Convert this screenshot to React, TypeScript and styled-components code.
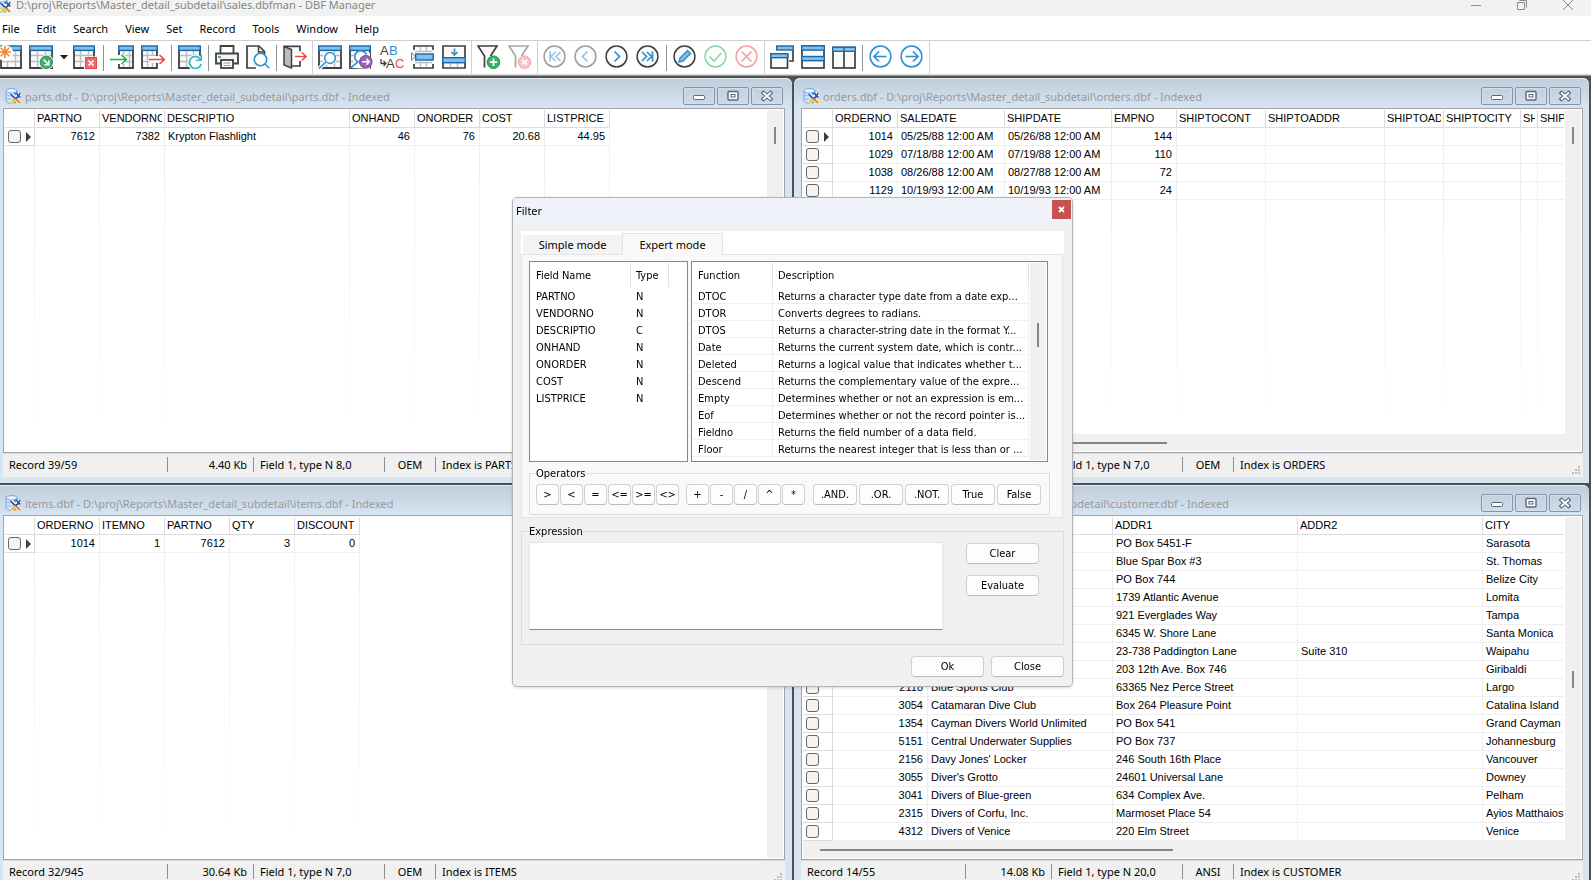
import React, { ReactNode } from 'react';
import styled, { createGlobalStyle, css } from 'styled-components';

const uiFont = '"Segoe UI", "Noto Sans", sans-serif';
const gridFont = '"Microsoft Sans Serif", "Liberation Sans", sans-serif';
const dialogFont = 'Tahoma, "DejaVu Sans Condensed", sans-serif';

const GlobalStyle = createGlobalStyle`
  *, *::before, *::after { box-sizing: border-box; }
  body { margin: 0; overflow: hidden; background: #fff; }
  button, input, textarea { font: inherit; color: inherit; margin: 0; }
`;

const Shell = styled.div`
  display: flex;
  flex-direction: column;
  height: 100vh;
  overflow: hidden;
  font: 11px/16px ${uiFont};
  color: #000;
`;

/* ---------- Application caption ---------- */

const Caption = styled.header`
  display: flex;
  flex: none;
  align-items: center;
  gap: 5px;
  height: 22px;
  margin: -6px 0 0 -5px;
  background: #f2f2f2;
  color: #858585;
`;

const CaptionText = styled.h1`
  flex: 1;
  margin: 0;
  font-size: 11px;
  font-weight: 400;
  white-space: nowrap;
`;

const CaptionButtons = styled.div`
  display: flex;
`;

const CaptionButton = styled.button`
  display: grid;
  place-items: center;
  width: 46px;
  height: 22px;
  padding: 0;
  border: 0;
  background: none;
`;

const MenuBar = styled.nav`
  display: flex;
  flex: none;
  gap: 1px;
  height: 25px;
  margin-left: -6px;
  border-bottom: 1px solid #cfcfcf;
`;

const MenuItem = styled.button`
  padding: 1px 8px 0;
  border: 0;
  background: none;
`;

/* ---------- Toolbar ---------- */

const Toolbar = styled.div`
  display: flex;
  flex: none;
  align-items: stretch;
  height: 34px;
  margin-left: -5px;
  border-bottom: 1px solid #d8d8d8;
`;

const ToolButton = styled.button`
  display: flex;
  align-items: center;
  width: 31px;
  padding: 0 3px 1px;
  border: 0;
  background: none;
  svg { flex: none; }
`;

const DropArrow = styled.button`
  display: grid;
  place-items: center;
  width: 13px;
  padding: 0;
  border: 0;
  background: none;
`;

const Separator = styled.span`
  width: 1px;
  margin: 4px 3px 3px 2px;
  background: #929292;
`;

const GroupLine = styled.span`
  width: 1px;
  margin: 0 2px 0 1px;
  background: #d0d0d0;
`;

/* ---------- MDI desktop and child windows ---------- */

const Desktop = styled.main`
  display: grid;
  flex: none;
  grid-template-columns: minmax(0, 792fr) minmax(0, 795fr);
  grid-template-rows: minmax(0, 1fr) minmax(0, 1fr);
  gap: 2px;
  height: calc(100vh - 65px);
  padding: 2px 2px 0 0;
  border-top: 1px solid #a0a0a0;
  background: #505050;
`;

const ChildWindow = styled.section<{ $cutLeft?: boolean }>`
  display: flex;
  flex-direction: column;
  padding: ${p => (p.$cutLeft ? '0 7px 6px 3px' : '0 6px 6px 7px')};
  border-radius: ${p => (p.$cutLeft ? '0 6px 0 0' : '6px 6px 0 0')};
  background: linear-gradient(#bfcddb, #d7e4f2 30px);
  box-shadow: inset 0 1px #e6edf5;
`;

const ChildCaption = styled.div`
  display: flex;
  flex: none;
  align-items: flex-start;
  gap: 4px;
  height: 30px;
  padding: 9px 2px 3px;
`;

const ChildIcon = styled.span`
  display: flex;
  padding-top: 1px;
`;

const ChildTitle = styled.h2`
  flex: 1;
  margin: 0;
  padding-top: 2px;
  font-size: 11px;
  font-weight: 400;
  line-height: 16px;
  color: #97999c;
  white-space: nowrap;
`;

const ChildButtons = styled.div`
  display: flex;
  gap: 2px;
`;

const ChildButton = styled.button`
  display: grid;
  place-items: center;
  width: 32px;
  height: 18px;
  padding: 0;
  border: 1px solid #8593ad;
  border-radius: 2px;
  background: linear-gradient(#c3d0df, #cddae8);
  box-shadow: inset 0 0 0 1px #d3deea;
`;

const Sheet = styled.div<{ $hScroll?: boolean }>`
  display: grid;
  flex: 1;
  grid-template-columns: minmax(0, 1fr) 17px;
  grid-template-rows: minmax(0, 1fr) ${p => (p.$hScroll ? '17px' : '')};
  min-height: 0;
  padding: 1px;
  border: 1px solid #a3a5aa;
  background: #fff;
`;

const GridArea = styled.div`
  display: flex;
  flex-direction: column;
  overflow: hidden;
  font: 11px/17px ${gridFont};
`;

const VTrack = styled.div<{ $start?: number }>`
  width: 16px;
  margin-left: 1px;
  padding: ${p => p.$start ?? 0}px 0 0 7px;
  background: #f0f0f0;
`;

const VThumb = styled.div<{ $long?: boolean }>`
  width: 2px;
  height: ${p => (p.$long ? 24 : 17)}px;
  background: #868686;
`;

const HTrack = styled.div`
  grid-column: 1 / -1;
  padding: 8px 0 0 17px;
  background: #f0f0f0;
`;

const HThumb = styled.div<{ $width: number }>`
  width: ${p => p.$width}px;
  height: 2px;
  background: #868686;
`;

const DataTable = styled.table<{ $fill?: boolean }>`
  flex: 1;
  table-layout: fixed;
  width: ${p => (p.$fill ? '100%' : '1px')};
  height: 100%;
  border-collapse: separate;
  border-spacing: 0;
`;

const Col = styled.col<{ $width?: number }>`
  width: ${p => (p.$width ? `${p.$width}px` : 'auto')};
`;

const edgeCell = css`
  padding-right: 0;
  border-right: 0;
`;

const HeadCell = styled.th<{ $edge?: boolean }>`
  height: 18px;
  padding: 0 2px 1px;
  border-right: 1px solid #dcdcdc;
  border-bottom: 1px solid #dcdcdc;
  font-weight: 400;
  line-height: 16px;
  text-align: left;
  ${p => p.$edge && edgeCell}
`;

const BodyCell = styled.td<{ $right?: boolean; $edge?: boolean }>`
  height: 18px;
  padding: 0 4px 0 3px;
  border-right: 1px solid #efefef;
  border-bottom: 1px solid #efefef;
  text-align: ${p => (p.$right ? 'right' : 'left')};
  ${p => p.$edge && edgeCell}
`;

const MarkCell = styled(BodyCell)`
  padding: 0 3px;
  border-color: #dcdcdc;
`;

const EmptyCell = styled.td<{ $edge?: boolean }>`
  padding: 0;
  ${p => !p.$edge && css`background: linear-gradient(#efefef, #fff) right / 1px 100% no-repeat;`}
`;

const Clip = styled.span`
  display: block;
  overflow: hidden;
  white-space: nowrap;
`;

const Mark = styled.span`
  display: flex;
  align-items: center;
  gap: 5px;
`;

const Check = styled.input`
  appearance: none;
  width: 13px;
  height: 13px;
  border: 1px solid #666;
  border-radius: 3px;
  background: #f4f4f4;
`;

const StatusBar = styled.footer`
  display: flex;
  flex: none;
  align-items: flex-start;
  height: 24px;
  padding-top: 3px;
  border-top: 1px solid #dadada;
  background: #f0f0f0;
`;

const StatusCell = styled.span<{ $width?: number; $align?: string }>`
  ${p => (p.$width ? css`flex: none; width: ${p.$width}px; border-right: 1px solid #8d8d8d;` : css`flex: 1;`)}
  height: 15px;
  padding: 0 6px;
  line-height: 15px;
  text-align: ${p => p.$align ?? 'left'};
  white-space: nowrap;
`;

const Grip = styled.span`
  align-self: flex-end;
  padding: 0 2px 2px 0;
  line-height: 0;
`;

/* ---------- Filter dialog ---------- */

const Dialog = styled.div`
  position: fixed;
  top: 197px;
  left: 512px;
  width: 561px;
  border: 1px solid #b4b4b4;
  border-radius: 5px;
  background: #f0f0f0;
  box-shadow: 0 1px 3px rgba(0, 0, 0, 0.15);
  font: 11px/13px ${dialogFont};
  overflow: hidden;
`;

const DialogCaption = styled.div`
  display: flex;
  align-items: flex-start;
  justify-content: space-between;
  height: 25px;
  padding: 2px 1px 0 3px;
  background: #eff3f9;
  font: 11px/22px ${uiFont};
`;

const DialogClose = styled.button`
  display: grid;
  place-items: center;
  width: 19px;
  height: 19px;
  padding: 0;
  border: 0;
  background: #c75050;
`;

const DialogBody = styled.div`
  padding: 8px 8px 9px;
`;

const Tabs = styled.div`
  display: flex;
  align-items: flex-end;
  height: 24px;
  margin-bottom: -1px;
  padding-left: 2px;
  background: #fff;
  font: 11px/16px ${uiFont};
`;

const Tab = styled.button<{ $active?: boolean }>`
  position: relative;
  width: ${p => (p.$active ? 101 : 99)}px;
  height: ${p => (p.$active ? 22 : 20)}px;
  padding: ${p => (p.$active ? 0 : '1px 0 0')};
  border: solid #e3e3e3;
  border-width: ${p => (p.$active ? '1px 1px 0' : '0 0 1px')};
  background: ${p => (p.$active ? '#f9f9f9' : '#f3f3f3')};
`;

const Panel = styled.div`
  margin-right: 1px;
  padding: 6px 14px 2px 7px;
  border: 1px solid #e3e3e3;
  background: #f9f9f9;
`;

const Lists = styled.div`
  display: flex;
  gap: 3px;
  height: 201px;
  margin-bottom: 5px;
`;

const ListBox = styled.div<{ $width?: number }>`
  display: flex;
  ${p => (p.$width ? css`flex: none; width: ${p.$width}px;` : css`flex: 1;`)}
  padding: 1px;
  border: 1px solid #828790;
  background: #fff;
  overflow: hidden;
`;

const ListTable = styled.table`
  flex: none;
  align-self: flex-start;
  table-layout: fixed;
  width: 1px;
  border-collapse: separate;
  border-spacing: 0;
  th, td { padding: 0 0 0 5px; font-weight: 400; text-align: left; white-space: nowrap; }
  th { height: 24px; border-right: 1px solid #e2e2e2; }
  td { height: 17px; padding-top: 2px; }
`;

const LinedCell = styled.td`
  border-right: 1px solid #efefef;
  border-bottom: 1px solid #efefef;
`;

const Group = styled.fieldset`
  margin: 0;
  min-width: 0;
  border: 1px solid #dcdcdc;
`;

const OperatorGroup = styled(Group)`
  display: flex;
  margin-right: -2px;
  padding: 4px 6px 9px;
`;

const ExpressionGroup = styled(Group)`
  display: flex;
  gap: 23px;
  margin-top: 7px;
  padding: 4px 24px 14px 7px;
`;

const Legend = styled.legend`
  padding: 0;
`;

const ButtonRow = styled.div`
  display: flex;
  gap: 1px;
  margin-right: 7px;
`;

const WordRow = styled.div`
  display: flex;
  gap: 2px;
  margin-left: 1px;
`;

const PushButton = styled.button<{ $width: number }>`
  flex: none;
  width: ${p => p.$width}px;
  height: 21px;
  padding: 0;
  border: 1px solid #d0d0d0;
  border-bottom-color: #bababa;
  border-radius: 4px;
  background: #fdfdfd;
  line-height: 19px;
  white-space: nowrap;
`;

const ExpressionBox = styled.textarea`
  display: block;
  flex: 1;
  height: 88px;
  padding: 4px;
  border: 1px solid #e6e6e6;
  border-bottom-color: #868686;
  background: #fff;
  resize: none;
`;

const ButtonColumn = styled.div`
  display: flex;
  flex-direction: column;
  gap: 11px;
  padding-top: 1px;
`;

const DialogFooter = styled.div`
  display: flex;
  justify-content: flex-end;
  gap: 7px;
  padding-top: 11px;
`;

/* ---------- Icons ---------- */

const DARK = '#404040';
const BLUE = '#2b8fd0';
const LIGHT = '#83bfe8';
const EDGE = '#1767ab';

const Svg = ({ children, size = 24 }: { children: ReactNode; size?: number }) => (
  <svg width={size} height={size} viewBox={`0 0 ${size} ${size}`} fill="none" aria-hidden="true">{children}</svg>
);

const BaseTable = ({ x = 0, w = 24 }: { x?: number; w?: number }) => (
  <>
    <rect x={x + 1} y={1} width={w - 2} height={22} fill="#fafafa" />
    <path d={`M${x + 2} 10.5h${w - 4}M${x + 2} 16.5h${w - 4}M${x + Math.round(w / 3)}.5 6v16M${x + Math.round((w * 2) / 3)}.5 6v16`} stroke="#bdbdbd" strokeWidth="1.4" />
    <path d={`M${x + 1} 5v18h${w - 2}V5`} stroke={DARK} strokeWidth="1.8" />
    <rect x={x + 0.7} y={1} width={w - 1.4} height={4.4} fill={LIGHT} stroke={EDGE} strokeWidth="1.4" />
  </>
);

const NewTable = () => (
  <Svg>
    <BaseTable x={2} w={22} />
    <circle cx="7" cy="8" r="8" fill="#fff" />
    <path d="M7 1v12M1 7h12M2.7 2.7l8.6 8.6M11.3 2.7l-8.6 8.6" stroke="#f0862b" strokeWidth="1.6" />
  </Svg>
);
const OpenTable = () => (
  <Svg>
    <BaseTable />
    <circle cx="17.3" cy="17.3" r="7.4" fill="#fff" />
    <circle cx="17.3" cy="17.3" r="6.2" fill="#3fae6c" stroke="#189a4c" />
    <path d="M14.5 14.5l5 5M19.8 15.3v4.5h-4.5" stroke="#fff" strokeWidth="1.6" />
  </Svg>
);
const DeleteTable = () => (
  <Svg>
    <BaseTable w={22} />
    <rect x="11" y="11.5" width="13" height="12.5" fill="#fff" />
    <rect x="12.6" y="12.6" width="11" height="11" fill="#ef6a6e" stroke="#e8383f" />
    <path d="M15.5 15.5l5 5M20.5 15.5l-5 5" stroke="#fff" strokeWidth="1.7" />
  </Svg>
);
const ImportTable = () => (
  <Svg>
    <BaseTable x={8} w={16} />
    <path d="M6 10h9v9H6z" fill="#fff" />
    <path d="M0 14.5h16M11.5 10l4.8 4.5-4.8 4.5" stroke="#1fae52" strokeWidth="1.6" />
  </Svg>
);
const ExportTable = () => (
  <Svg>
    <BaseTable w={17} />
    <path d="M8 11h12v7H8z" fill="#fff" />
    <path d="M8 14.5h15M18.5 10l4.8 4.5-4.8 4.5" stroke="#f04747" strokeWidth="1.6" />
  </Svg>
);
const RefreshTable = () => (
  <Svg>
    <BaseTable w={23} />
    <circle cx="17.5" cy="17.5" r="8" fill="#fff" />
    <path d="M22.6 14.5a6 6 0 1 0 .6 4.5" stroke="#32b6c9" strokeWidth="1.7" />
    <path d="M23.3 9.8v5.4h-5.4" stroke="#32b6c9" strokeWidth="1.6" />
  </Svg>
);
const Print = () => (
  <Svg>
    <path d="M5.5 8V1h13v7" fill="#fff" stroke={DARK} strokeWidth="1.8" />
    <path d="M5.5 18.5H1V8.5h22v10h-4.5" fill="#f4f4f4" stroke={DARK} strokeWidth="1.8" />
    <path d="M3 12h3" stroke={BLUE} strokeWidth="1.6" />
    <rect x="6" y="15" width="12" height="8" fill="#fff" stroke={DARK} strokeWidth="1.8" />
    <path d="M8.5 18h7M8.5 20.5h7" stroke="#999" strokeWidth="1.1" />
  </Svg>
);
const Preview = () => (
  <Svg>
    <path d="M10 23H1V1h12l5.5 5.5V9" fill="#fafafa" stroke={DARK} strokeWidth="1.7" />
    <path d="M12.5 1v6h6" stroke={DARK} strokeWidth="1.5" />
    <circle cx="14.5" cy="14.5" r="6.2" fill="#fff" stroke={BLUE} strokeWidth="1.6" />
    <path d="M19 19l4.3 4.3" stroke={BLUE} strokeWidth="1.6" />
  </Svg>
);
const Exit = () => (
  <Svg>
    <path d="M1 1.5l7.5 3V23L1 20z" fill="#bcbcbc" stroke={DARK} strokeWidth="1.5" />
    <path d="M1 1.3h16v5M8.5 21H17v-5" stroke={DARK} strokeWidth="1.7" />
    <path d="M12 11.5h11M18.8 7.5l4.4 4-4.4 4" stroke="#f04747" strokeWidth="1.6" />
  </Svg>
);
const Find = () => (
  <Svg>
    <BaseTable />
    <circle cx="11.5" cy="13" r="7" fill="#fff" />
    <circle cx="12" cy="13" r="5.4" fill="#fff" stroke={BLUE} strokeWidth="1.5" />
    <path d="M8 17l-7.5 7" stroke="#fff" strokeWidth="4" />
    <path d="M8 17l-7 6.3" stroke={BLUE} strokeWidth="1.6" />
  </Svg>
);
const FindNext = () => (
  <Svg>
    <BaseTable w={22} />
    <path d="M3 23L6 8h15v16z" fill="#fff" />
    <path d="M17.5 9.8A6 6 0 1 0 9 17L1 23.3" stroke={BLUE} strokeWidth="1.6" />
    <circle cx="16.8" cy="16.8" r="6.3" fill="#9a62b5" stroke="#7c3d9c" />
    <path d="M13 16.8h7M17.3 13.8l3 3-3 3" stroke="#fff" strokeWidth="1.5" />
  </Svg>
);
const Replace = () => (
  <Svg>
    <g fontFamily='"Liberation Sans", sans-serif' fontSize="13">
      <text x="0" y="10" fill={DARK}>A</text>
      <text x="9" y="10" fill={BLUE}>B</text>
      <text x="6" y="23" fill={DARK}>A</text>
      <text x="15" y="23" fill="#f04747">C</text>
    </g>
    <path d="M1 14v4.5h4.5M3.5 16L6 18.5 3.5 21" stroke={DARK} strokeWidth="1.3" />
  </Svg>
);
const GoTo = () => (
  <Svg>
    <path d="M3 5V1h19v4M3 19v4h19v-4" stroke={DARK} strokeWidth="1.7" />
    <path d="M9.5 2v5M15.5 2v5M9.5 17v5M15.5 17v5M4 6.5h17M4 17.5h17" stroke="#bdbdbd" strokeWidth="1.3" />
    <rect x="4.7" y="9" width="17.5" height="6" fill={LIGHT} stroke={EDGE} strokeWidth="1.4" />
    <path d="M.5 7.5v8L4 11.5z" fill="#fff" stroke={BLUE} />
  </Svg>
);
const Append = () => (
  <Svg>
    <path d="M1 12V1h22v11M1 18v5h22v-5" fill="#fafafa" stroke={DARK} strokeWidth="1.7" />
    <path d="M8.5 18v4M15.5 18v4" stroke="#bdbdbd" strokeWidth="1.3" />
    <rect x=".7" y="12.7" width="22.6" height="5" fill={LIGHT} stroke={EDGE} strokeWidth="1.4" />
    <path d="M12.5 3.5v6M9.5 7l3 3 3-3" stroke={BLUE} strokeWidth="1.6" />
  </Svg>
);
const Filter = ({ remove }: { remove?: boolean }) => (
  <Svg>
    <g opacity={remove ? 0.45 : 1}>
      <path d="M7.5 22.5V11L1 1h19l-6.500 10" fill="#fafafa" stroke={DARK} strokeWidth="1.7" />
      <circle cx="16.5" cy="17.2" r="6.3" fill={remove ? '#f2787c' : '#3fae6c'} stroke={remove ? '#e8383f' : '#189a4c'} />
      <path d={remove ? 'M14 14.7l5 5M19 14.7l-5 5' : 'M16.5 13.5v7.4M12.8 17.2h7.4'} stroke="#fff" strokeWidth="1.7" />
    </g>
  </Svg>
);
const Round = ({ d, ring = DARK, ink = BLUE, dim }: { d: string; ring?: string; ink?: string; dim?: boolean }) => (
  <Svg>
    <g opacity={dim ? 0.5 : 1}>
      <circle cx="11.5" cy="11.5" r="10.4" fill="#fdfdfd" stroke={ring} strokeWidth="1.5" />
      <path d={d} stroke={ink} strokeWidth="1.7" />
    </g>
  </Svg>
);
const Pencil = () => (
  <Svg>
    <circle cx="11.5" cy="11.5" r="10.4" fill="#fdfdfd" stroke={DARK} strokeWidth="1.5" />
    <path d="M6 17l1-4 7.5-7.5 3 3L10 16z" fill={LIGHT} stroke={BLUE} strokeWidth="1.4" />
  </Svg>
);
const Cascade = () => (
  <Svg>
    <path d="M23 5v11h-4" stroke={DARK} strokeWidth="1.7" />
    <rect x="6.7" y="1" width="16.6" height="4" fill={LIGHT} stroke={EDGE} strokeWidth="1.4" />
    <rect x="1" y="9" width="16.5" height="14" fill="#fafafa" stroke={DARK} strokeWidth="1.7" />
    <rect x=".7" y="8.7" width="17" height="4" fill={LIGHT} stroke={EDGE} strokeWidth="1.4" />
  </Svg>
);
const TileRows = () => (
  <Svg>
    <rect x="1" y="1" width="22" height="22" fill="#fafafa" stroke={DARK} strokeWidth="1.7" />
    <rect x=".7" y=".9" width="22.6" height="4.2" fill={LIGHT} stroke={EDGE} strokeWidth="1.4" />
    <rect x=".7" y="11.5" width="22.6" height="4.2" fill={LIGHT} stroke={EDGE} strokeWidth="1.4" />
  </Svg>
);
const TileColumns = () => (
  <Svg>
    <rect x="1" y="2.5" width="22" height="20.5" fill="#fafafa" stroke={DARK} strokeWidth="1.7" />
    <path d="M12 6v17" stroke={DARK} strokeWidth="1.7" />
    <path d="M.7 2.2h22.6v4.200H.7zM12 2v4" fill={LIGHT} stroke={EDGE} strokeWidth="1.4" />
  </Svg>
);

const DatabaseIcon = () => (
  <Svg size={16}>
    <path d="M1 3v10c0 1.5 2.500 2.300 5.500 2.300S12 14.500 12 13V3z" fill="#cfe3fb" stroke="#7da7da" />
    <path d="M7.500 5.200c2.500-.2 4.500-.9 4.500-1.900V13c0 1.500-2 2.200-4.500 2.300z" fill="#3f7fd6" />
    <ellipse cx="6.5" cy="2.8" rx="5.5" ry="2.200" fill="#eaf4ff" stroke="#6fa0dc" />
    <path d="M1 6.500c1 1.500 8 2 11 0M1 10c1 1.500 8 2 11 0" stroke="#8db5e6" />
    <path d="M6 6l9 9M15 6l-9 9" stroke="#fff" strokeWidth="4" />
    <path d="M5.500 6l5 5" stroke="#2c5fb8" strokeWidth="1.8" />
    <path d="M10.500 10.500L15 15" stroke="#e98a15" strokeWidth="2.400" />
    <path d="M15 5l-1.500 3.500L10.500 10.500M12 5.500l1.500 3 2 .5" stroke="#2450a8" strokeWidth="1.6" />
    <path d="M10 11l-3.700 3.700" stroke="#f7c02c" strokeWidth="2.800" />
  </Svg>
);

const GripIcon = () => (
  <svg width="10" height="10" fill="#bdbdbd" aria-hidden="true">
    <path d="M7 1h2v2H7zM4 4h2v2H4zM7 4h2v2H7zM1 7h2v2H1zM4 7h2v2H4zM7 7h2v2H7z" />
  </svg>
);

/* ---------- Data ---------- */

type Column = { name: string; width?: number; numeric?: boolean };
type WindowProps = {
  file: string;
  cutLeft?: boolean;
  columns: Column[];
  rows: string[][];
  current?: number;
  thumbAt?: number;
  hScroll?: number;
  status: string[];
};

const parts: WindowProps = {
  file: 'parts.dbf',
  cutLeft: true,
  columns: [
    { name: 'PARTNO', width: 65, numeric: true }, { name: 'VENDORNO', width: 65, numeric: true },
    { name: 'DESCRIPTIO', width: 185 }, { name: 'ONHAND', width: 65, numeric: true },
    { name: 'ONORDER', width: 65, numeric: true }, { name: 'COST', width: 65, numeric: true },
    { name: 'LISTPRICE', width: 65, numeric: true },
  ],
  rows: [['7612', '7382', 'Krypton Flashlight', '46', '76', '20.68', '44.95']],
  current: 0,
  thumbAt: 17,
  status: ['Record 39/59', '4.40 Kb', 'Field 1, type N 8,0', 'OEM', 'Index is PARTS'],
};

const orders: WindowProps = {
  file: 'orders.dbf',
  columns: [
    { name: 'ORDERNO', width: 65, numeric: true }, { name: 'SALEDATE', width: 107 },
    { name: 'SHIPDATE', width: 107 }, { name: 'EMPNO', width: 65, numeric: true },
    { name: 'SHIPTOCONT', width: 89 }, { name: 'SHIPTOADDR', width: 119 },
    { name: 'SHIPTOADDR2', width: 59 }, { name: 'SHIPTOCITY', width: 77 },
    { name: 'SHIPTOSTAT', width: 17 }, { name: 'SHIPTOZIP' },
  ],
  rows: [
    ['1014', '05/25/88 12:00 AM', '05/26/88 12:00 AM', '144'],
    ['1029', '07/18/88 12:00 AM', '07/19/88 12:00 AM', '110'],
    ['1038', '08/26/88 12:00 AM', '08/27/88 12:00 AM', '72'],
    ['1129', '10/19/93 12:00 AM', '10/19/93 12:00 AM', '24'],
  ],
  current: 0,
  thumbAt: 17,
  hScroll: 347,
  status: ['', '', 'Field 1, type N 7,0', 'OEM', 'Index is ORDERS'],
};

const items: WindowProps = {
  file: 'items.dbf',
  cutLeft: true,
  columns: ['ORDERNO', 'ITEMNO', 'PARTNO', 'QTY', 'DISCOUNT'].map(name => ({ name, width: 65, numeric: true })),
  rows: [['1014', '1', '7612', '3', '0']],
  current: 0,
  status: ['Record 32/945', '30.64 Kb', 'Field 1, type N 7,0', 'OEM', 'Index is ITEMS'],
};

const customer: WindowProps = {
  file: 'customer.dbf',
  columns: [
    { name: '', width: 95, numeric: true }, { name: '', width: 185 },
    { name: 'ADDR1', width: 185 }, { name: 'ADDR2', width: 185 }, { name: 'CITY' },
  ],
  rows: [
    ['', '', 'PO Box 5451-F', '', 'Sarasota'],
    ['', '', 'Blue Spar Box #3', '', 'St. Thomas'],
    ['', '', 'PO Box 744', '', 'Belize City'],
    ['', '', '1739 Atlantic Avenue', '', 'Lomita'],
    ['', '', '921 Everglades Way', '', 'Tampa'],
    ['', '', '6345 W. Shore Lane', '', 'Santa Monica'],
    ['', '', '23-738 Paddington Lane', 'Suite 310', 'Waipahu'],
    ['', '', '203 12th Ave. Box 746', '', 'Giribaldi'],
    ['2118', 'Blue Sports Club', '63365 Nez Perce Street', '', 'Largo'],
    ['3054', 'Catamaran Dive Club', 'Box 264 Pleasure Point', '', 'Catalina Island'],
    ['1354', 'Cayman Divers World Unlimited', 'PO Box 541', '', 'Grand Cayman'],
    ['5151', 'Central Underwater Supplies', 'PO Box 737', '', 'Johannesburg'],
    ['2156', "Davy Jones' Locker", '246 South 16th Place', '', 'Vancouver'],
    ['3055', "Diver's Grotto", '24601 Universal Lane', '', 'Downey'],
    ['3041', 'Divers of Blue-green', '634 Complex Ave.', '', 'Pelham'],
    ['2315', 'Divers of Corfu, Inc.', 'Marmoset Place 54', '', 'Ayios Matthaios'],
    ['4312', 'Divers of Venice', '220 Elm Street', '', 'Venice'],
  ],
  thumbAt: 154,
  hScroll: 353,
  status: ['Record 14/55', '14.08 Kb', 'Field 1, type N 20,0', 'ANSI', 'Index is CUSTOMER'],
};

const fields = [['PARTNO', 'N'], ['VENDORNO', 'N'], ['DESCRIPTIO', 'C'], ['ONHAND', 'N'], ['ONORDER', 'N'], ['COST', 'N'], ['LISTPRICE', 'N']];

const functions = [
  ['DTOC', 'Returns a character type date from a date exp...'],
  ['DTOR', 'Converts degrees to radians.'],
  ['DTOS', 'Returns a character-string date in the format Y...'],
  ['Date', 'Returns the current system date, which is contr...'],
  ['Deleted', 'Returns a logical value that indicates whether t...'],
  ['Descend', 'Returns the complementary value of the expre...'],
  ['Empty', 'Determines whether or not an expression is em...'],
  ['Eof', 'Determines whether or not the record pointer is...'],
  ['Fieldno', 'Returns the field number of a data field.'],
  ['Floor', 'Returns the nearest integer that is less than or ...'],
];

/* ---------- Composition ---------- */

function DataWindow({ file, cutLeft, columns, rows, current, thumbAt, hScroll, status }: WindowProps) {
  const [record, size, field, encoding, index] = status;
  return (
    <ChildWindow $cutLeft={cutLeft}>
      <ChildCaption>
        <ChildIcon><DatabaseIcon /></ChildIcon>
        <ChildTitle>{`${file} - D:\\proj\\Reports\\Master_detail_subdetail\\${file} - Indexed`}</ChildTitle>
        <ChildButtons>
          <ChildButton aria-label="Minimize">
            <svg width="12" height="12" fill="#fff" stroke="#5b667c"><rect x=".5" y="5.5" width="11" height="4" rx="1" /></svg>
          </ChildButton>
          <ChildButton aria-label="Maximize">
            <svg width="12" height="12" fill="#fff" stroke="#5b667c"><rect x="1" y="1.5" width="10" height="8.5" rx="1" strokeWidth="1.4" /><rect x="4" y="4.5" width="4" height="2.5" /></svg>
          </ChildButton>
          <ChildButton aria-label="Close">
            <svg width="12" height="12" fill="none"><path d="M2.500 3l7 6M9.500 3l-7 6" stroke="#5b667c" strokeWidth="4" strokeLinecap="square" /><path d="M2 2.500l8 7M10 2.500l-8 7" stroke="#fff" strokeWidth="2" /></svg>
          </ChildButton>
        </ChildButtons>
      </ChildCaption>
      <Sheet $hScroll={hScroll !== undefined}>
        <GridArea>
          <DataTable $fill={columns.some(c => !c.width)}>
            <colgroup>
              <Col $width={30} />
              {columns.map((c, i) => <Col key={i} $width={c.width} />)}
            </colgroup>
            <thead>
              <tr>
                <HeadCell />
                {columns.map((c, i) => <HeadCell key={i} $edge={!c.width}><Clip>{c.name}</Clip></HeadCell>)}
              </tr>
            </thead>
            <tbody>
              {rows.map((row, r) => (
                <tr key={r}>
                  <MarkCell>
                    <Mark>
                      <Check type="checkbox" aria-label={`Mark record ${r + 1}`} />
                      {r === current && <svg width="5" height="10" fill="#404040" aria-hidden="true"><path d="M0 0l5 5-5 5z" /></svg>}
                    </Mark>
                  </MarkCell>
                  {columns.map((c, i) => <BodyCell key={i} $right={c.numeric} $edge={!c.width}><Clip>{row[i]}</Clip></BodyCell>)}
                </tr>
              ))}
              <tr>
                <EmptyCell />
                {columns.map((c, i) => <EmptyCell key={i} $edge={!c.width} />)}
              </tr>
            </tbody>
          </DataTable>
        </GridArea>
        <VTrack $start={thumbAt}>{thumbAt !== undefined && <VThumb />}</VTrack>
        {hScroll !== undefined && <HTrack><HThumb $width={hScroll} /></HTrack>}
      </Sheet>
      <StatusBar>
        <StatusCell $width={165}>{record}</StatusCell>
        <StatusCell $width={86} $align="right">{size}</StatusCell>
        <StatusCell $width={131}>{field}</StatusCell>
        <StatusCell $width={51} $align="center">{encoding}</StatusCell>
        <StatusCell>{index}</StatusCell>
        <Grip><GripIcon /></Grip>
      </StatusBar>
    </ChildWindow>
  );
}

const Tool = ({ label, children }: { label: string; children: ReactNode }) => (
  <ToolButton aria-label={label}>{children}</ToolButton>
);

function MainToolbar() {
  return (
    <Toolbar role="toolbar">
      <Tool label="New table"><NewTable /></Tool>
      <Tool label="Open table"><OpenTable /></Tool>
      <DropArrow aria-label="Recent tables"><svg width="8" height="5" fill="#202020"><path d="M0 0h8L4 4.5z" /></svg></DropArrow>
      <Tool label="Close table"><DeleteTable /></Tool>
      <Separator />
      <Tool label="Import"><ImportTable /></Tool>
      <Tool label="Export"><ExportTable /></Tool>
      <Separator />
      <Tool label="Refresh"><RefreshTable /></Tool>
      <Separator />
      <Tool label="Print"><Print /></Tool>
      <Tool label="Preview"><Preview /></Tool>
      <Separator />
      <Tool label="Exit"><Exit /></Tool>
      <GroupLine />
      <Tool label="Find"><Find /></Tool>
      <Tool label="Find next"><FindNext /></Tool>
      <Tool label="Replace"><Replace /></Tool>
      <Tool label="Go to"><GoTo /></Tool>
      <Tool label="Append"><Append /></Tool>
      <GroupLine />
      <Tool label="Set filter"><Filter /></Tool>
      <Tool label="Remove filter"><Filter remove /></Tool>
      <GroupLine />
      <Tool label="First"><Round dim d="M7 6.5v10M12.5 7L8 11.500l4.500 4.500M17.500 7L13 11.500l4.500 4.500" /></Tool>
      <Tool label="Previous"><Round dim d="M13.5 6.500l-5 5 5 5" /></Tool>
      <Tool label="Next"><Round d="M9.5 6.500l5 5-5 5" /></Tool>
      <Tool label="Last"><Round d="M16.5 6.500v10M6 7l4.500 4.500L6 16M11 7l4.500 4.500L11 16" /></Tool>
      <Separator />
      <Tool label="Edit"><Pencil /></Tool>
      <Tool label="Post"><Round dim ring="#1fae52" ink="#1fae52" d="M5.500 11.500L10 16l7.500-8" /></Tool>
      <Tool label="Cancel"><Round dim ring="#f04747" ink="#f04747" d="M6.500 6.500l10 10M16.500 6.500l-10 10" /></Tool>
      <GroupLine />
      <Tool label="Cascade"><Cascade /></Tool>
      <Tool label="Tile horizontally"><TileRows /></Tool>
      <Tool label="Tile vertically"><TileColumns /></Tool>
      <Separator />
      <Tool label="Back"><Round ring={BLUE} d="M17.500 11.500h-12M10 6.500l-5 5 5 5" /></Tool>
      <Tool label="Forward"><Round ring={BLUE} d="M5.500 11.500h12M13 6.500l5 5-5 5" /></Tool>
      <GroupLine />
    </Toolbar>
  );
}

function FilterDialog() {
  return (
    <Dialog role="dialog" aria-labelledby="filter-title">
      <DialogCaption>
        <span id="filter-title">Filter</span>
        <DialogClose aria-label="Close dialog">
          <svg width="7" height="7" stroke="#fff" strokeWidth="1.8"><path d="M1 1l5 5M6 1L1 6" /></svg>
        </DialogClose>
      </DialogCaption>
      <DialogBody>
        <Tabs role="tablist">
          <Tab role="tab" aria-selected={false}>Simple mode</Tab>
          <Tab role="tab" aria-selected $active>Expert mode</Tab>
        </Tabs>
        <Panel role="tabpanel">
          <Lists>
            <ListBox $width={159}>
              <ListTable>
                <colgroup><Col $width={100} /><Col $width={38} /></colgroup>
                <thead><tr><th>Field Name</th><th>Type</th></tr></thead>
                <tbody>{fields.map(([name, type]) => <tr key={name}><td>{name}</td><td>{type}</td></tr>)}</tbody>
              </ListTable>
            </ListBox>
            <ListBox>
              <ListTable>
                <colgroup><Col $width={80} /><Col $width={256} /></colgroup>
                <thead><tr><th>Function</th><th>Description</th></tr></thead>
                <tbody>{functions.map(([name, text]) => <tr key={name}><LinedCell>{name}</LinedCell><LinedCell>{text}</LinedCell></tr>)}</tbody>
              </ListTable>
              <VTrack $start={60}><VThumb $long /></VTrack>
            </ListBox>
          </Lists>
          <OperatorGroup>
            <Legend>Operators</Legend>
            <ButtonRow>{['>', '<', '=', '<=', '>=', '<>'].map(t => <PushButton key={t} $width={23}>{t}</PushButton>)}</ButtonRow>
            <ButtonRow>{['+', '-', '/', '^', '*'].map(t => <PushButton key={t} $width={23}>{t}</PushButton>)}</ButtonRow>
            <WordRow>{['.AND.', '.OR.', '.NOT.', 'True', 'False'].map(t => <PushButton key={t} $width={44}>{t}</PushButton>)}</WordRow>
          </OperatorGroup>
        </Panel>
        <ExpressionGroup>
          <Legend>Expression</Legend>
          <ExpressionBox aria-label="Expression" />
          <ButtonColumn>
            <PushButton $width={73}>Clear</PushButton>
            <PushButton $width={73}>Evaluate</PushButton>
          </ButtonColumn>
        </ExpressionGroup>
        <DialogFooter>
          <PushButton $width={73}>Ok</PushButton>
          <PushButton $width={73}>Close</PushButton>
        </DialogFooter>
      </DialogBody>
    </Dialog>
  );
}

export default function App() {
  return (
    <Shell>
      <GlobalStyle />
      <Caption>
        <DatabaseIcon />
        <CaptionText>{'D:\\proj\\Reports\\Master_detail_subdetail\\sales.dbfman - DBF Manager'}</CaptionText>
        <CaptionButtons>
          <CaptionButton aria-label="Minimize"><svg width="10" height="10" stroke="#8a8a8a"><path d="M0 5.500h10" /></svg></CaptionButton>
          <CaptionButton aria-label="Restore"><svg width="10" height="10" fill="none" stroke="#8a8a8a"><path d="M.5 2.500h7v7h-7zM2.500.5h7v7" /></svg></CaptionButton>
          <CaptionButton aria-label="Close"><svg width="10" height="10" stroke="#8a8a8a"><path d="M0 0l10 10M10 0L0 10" /></svg></CaptionButton>
        </CaptionButtons>
      </Caption>
      <MenuBar>
        {['File', 'Edit', 'Search', 'View', 'Set', 'Record', 'Tools', 'Window', 'Help'].map(m => <MenuItem key={m}>{m}</MenuItem>)}
      </MenuBar>
      <MainToolbar />
      <Desktop>
        <DataWindow {...parts} />
        <DataWindow {...orders} />
        <DataWindow {...items} />
        <DataWindow {...customer} />
      </Desktop>
      <FilterDialog />
    </Shell>
  );
}
